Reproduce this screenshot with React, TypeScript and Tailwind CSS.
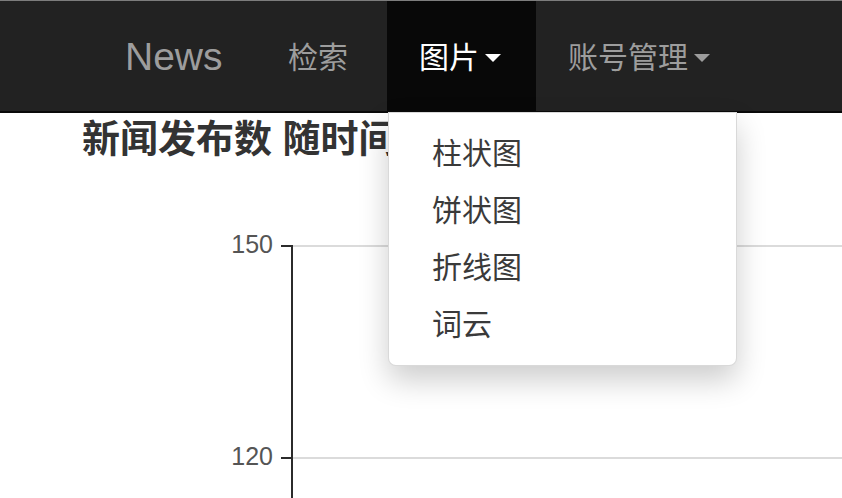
import React from "react";

const menuItems = ["柱状图", "饼状图", "折线图", "词云"];

function Caret() {
  return (
    <span className="ml-[6px] inline-block h-0 w-0 border-x-[8px] border-t-[8px] border-x-transparent border-t-current" />
  );
}

function Chart() {
  return (
    <svg width="842" height="338" className="block">
      <line x1="292" y1="84" x2="842" y2="84" stroke="#cfcfcf" strokeWidth="1.5" />
      <line x1="292" y1="296" x2="842" y2="296" stroke="#cfcfcf" strokeWidth="1.5" />
      <line x1="292" y1="83" x2="292" y2="338" stroke="#2b2b2b" strokeWidth="2" />
      <line x1="281" y1="84" x2="292" y2="84" stroke="#2b2b2b" strokeWidth="2" />
      <line x1="281" y1="296" x2="292" y2="296" stroke="#2b2b2b" strokeWidth="2" />
      <text x="273" y="84" textAnchor="end" dominantBaseline="middle" fontSize="25" fill="#555">
        150
      </text>
      <text x="273" y="296" textAnchor="end" dominantBaseline="middle" fontSize="25" fill="#555">
        120
      </text>
    </svg>
  );
}

export default function App() {
  return (
    <div className="relative h-[498px] w-[842px] overflow-hidden bg-white font-['Liberation_Sans','Noto_Sans_CJK_SC',sans-serif]">
      <nav className="flex h-[113px] border-t border-b-2 border-t-[#7d7d7d] border-b-[#0a0a0a] bg-[#222] pl-[93px] text-[#9d9d9d]">
        <a className="flex w-[163px] items-center px-[32px] text-[39px] leading-none">News</a>
        <a className="flex w-[131px] items-center px-[32px] pt-[4px] text-[30px] leading-none">检索</a>
        <a className="flex w-[149px] items-center bg-[#080808] px-[32px] pt-[4px] text-[30px] leading-none text-white">
          图片
          <Caret />
        </a>
        <a className="flex items-center px-[32px] pt-[4px] text-[30px] leading-none">
          账号管理
          <Caret />
        </a>
      </nav>

      <h4 className="ml-[82px] mt-[4px] h-[45px] text-[38px] font-bold leading-[45px] text-[#333]">新闻发布数 随时间变化</h4>

      <Chart />

      <ul className="absolute left-[388px] top-[112px] w-[349px] rounded-b-[8px] border border-[rgba(0,0,0,0.15)] bg-white py-[12px] shadow-[0_14px_30px_rgba(0,0,0,0.2)]">
        {menuItems.map((item) => (
          <li key={item} className="flex h-[57px] items-center pl-[43px] text-[30px] leading-none text-[#3a3a3a]">
            {item}
          </li>
        ))}
      </ul>
    </div>
  );
}
